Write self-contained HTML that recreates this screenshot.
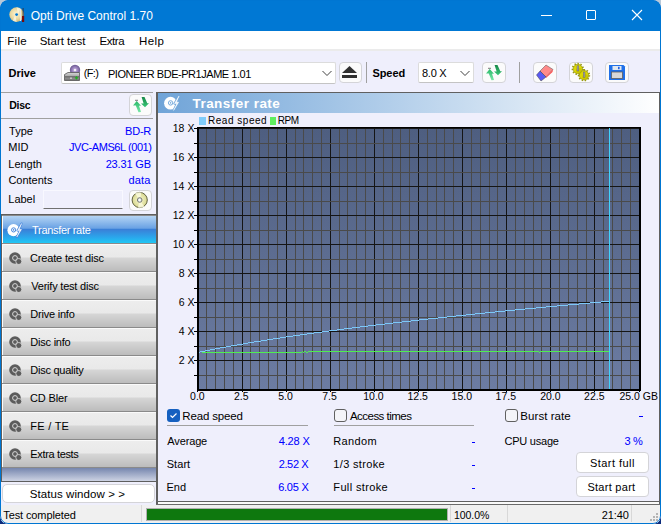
<!DOCTYPE html>
<html><head><meta charset="utf-8"><style>
*{margin:0;padding:0;box-sizing:border-box}
html,body{width:661px;height:524px;overflow:hidden;background:linear-gradient(#b8c8d8 50%,#0c2c7c 50%)}
body{font-family:"Liberation Sans", sans-serif;position:relative}
.a{position:absolute}
.t{position:absolute;white-space:pre;line-height:1}
.btn{position:absolute;background:#fbfbfb;border:1px solid #d4d4d8;border-radius:4px}
.combo{position:absolute;background:#fff;border:1px solid #dcdcdc;border-bottom-color:#c4c4c4;border-radius:2px}
.nav{position:absolute;left:2px;width:154px;height:27px;box-shadow:inset 1px 0 #fdfdfd;background:linear-gradient(#fafafa 0,#fafafa 1px,#ededed 1px,#e9e9e9 13px,#d6d6d6 14px,#bcbcbc 27px)}
.vsep{position:absolute;width:1px;background:#a0a0a0}
</style></head><body>
<div class="a" style="left:0;top:0;width:661px;height:524px;border-radius:8px 8px 8px 8px;overflow:hidden">
<!-- window bg -->
<div class="a" style="left:0;top:0;width:661px;height:524px;background:#efeffc;border-radius:8px 8px 7px 7px"></div>
<!-- title bar -->
<div class="a" style="left:0;top:0;width:661px;height:31px;background:#0078d4;border-radius:8px 8px 0 0"></div>
<div class="a" style="left:541px;top:15px;width:11px;height:1px;background:#fff"></div>
<div class="a" style="left:586px;top:10px;width:10px;height:10px;border:1px solid #fff;border-radius:1px"></div>
<svg class="a" style="left:631px;top:9px" width="12" height="12"><path d="M1 1L11 11M11 1L1 11" stroke="#fff" stroke-width="1.1"/></svg>
<!-- menu -->
<div class="a" style="left:1px;top:31px;width:659px;height:18px;background:#fff"></div>
<div class="a" style="left:1px;top:49px;width:659px;height:2px;background:#ebebeb"></div>
<!-- toolbar -->
<div class="combo" style="left:61px;top:62px;width:275px;height:22px"></div>
<svg class="a" style="left:322px;top:70px" width="10" height="7"><path d="M0.5 1L5 5.5L9.5 1" fill="none" stroke="#404040" stroke-width="1"/></svg>
<div class="btn" style="left:339px;top:62px;width:23px;height:21px"></div>
<svg class="a" style="left:341px;top:66px" width="17" height="13"><path d="M8.5 0L16 7H1z" fill="#303030"/><rect x="1" y="9" width="15" height="3" fill="#303030"/></svg>
<div class="vsep" style="left:366px;top:62px;height:21px"></div>
<div class="combo" style="left:418px;top:62px;width:56px;height:21px"></div>
<svg class="a" style="left:460px;top:70px" width="10" height="7"><path d="M0.5 1L5 5.5L9.5 1" fill="none" stroke="#404040" stroke-width="1"/></svg>
<div class="btn" style="left:482px;top:62px;width:24px;height:21px"></div>
<div class="vsep" style="left:519px;top:62px;height:21px"></div>
<div class="btn" style="left:533px;top:62px;width:24px;height:21px"></div>
<div class="btn" style="left:569px;top:62px;width:24px;height:21px"></div>
<div class="btn" style="left:605px;top:62px;width:24px;height:21px"></div>
<!-- disc panel -->
<div class="a" style="left:1px;top:92px;width:152px;height:1px;background:#a0a0a0"></div>
<div class="a" style="left:1px;top:118px;width:152px;height:1px;background:#a0a0a0"></div>
<div class="btn" style="left:129px;top:94px;width:23px;height:22px"></div>
<div class="a" style="left:43px;top:190px;width:80px;height:19px;border:1px solid #f8f8ff;border-bottom-color:#707070;background:#efeffc;border-radius:1px"></div>
<div class="btn" style="left:129px;top:190px;width:23px;height:21px"></div>
<!-- nav -->
<div class="a" style="left:1px;top:214px;width:157px;height:268px;border:1px solid #5e5e5e;border-right-width:2px;background:#8a8a8a"></div>
<div class="nav" style="top:216px;background:linear-gradient(#b4d4f4,#6aa2e4 45%,#3a80d8 50%,#2aa8ec 80%,#20c8f4)"></div>
<div class="nav" style="top:244px"></div>
<div class="nav" style="top:272px"></div>
<div class="nav" style="top:300px"></div>
<div class="nav" style="top:328px"></div>
<div class="nav" style="top:356px"></div>
<div class="nav" style="top:384px"></div>
<div class="nav" style="top:412px"></div>
<div class="nav" style="top:440px"></div>
<div class="a" style="left:2px;top:468px;width:154px;height:13px;background:linear-gradient(#7686ae,#cdd3e3)"></div>
<div class="btn" style="left:2px;top:484px;width:153px;height:19px;background:#fff;border-radius:5px"></div>
<!-- graph panel -->
<div class="a" style="left:156px;top:92px;width:504px;height:410px;border:1px solid #606060;border-left-width:2px;background:#efeffc"></div>
<div class="a" style="left:158px;top:502px;width:501px;height:2px;background:#fafafa"></div>
<div class="a" style="left:156px;top:501px;width:2px;height:4px;background:#606060"></div>
<div class="a" style="left:659px;top:501px;width:1px;height:4px;background:#606060"></div>
<div class="a" style="left:156px;top:504px;width:504px;height:1px;background:#6a6a6a"></div>
<div class="a" style="left:158px;top:93px;width:501px;height:20px;background:linear-gradient(90deg,#70a4d8,#fff)"></div>
<div class="a" style="left:199px;top:117px;width:7px;height:8px;background:#80ccfa"></div>
<div class="a" style="left:270px;top:117px;width:6px;height:8px;background:#60ee60"></div>
<!-- checkboxes -->
<div class="a" style="left:167px;top:409px;width:13px;height:13px;background:#1560c0;border-radius:3px"></div>
<svg class="a" style="left:167px;top:409px" width="13" height="13"><path d="M3.5 6.5L5.5 8.5L9.5 4.5" fill="none" stroke="#fff" stroke-width="1.2"/></svg>
<div class="a" style="left:167px;top:425px;width:141px;height:1px;background:#a0a0a0"></div>
<div class="a" style="left:334px;top:409px;width:13px;height:13px;border:1px solid #606060;background:#f4f4f8;border-radius:3px"></div>
<div class="a" style="left:334px;top:425px;width:140px;height:1px;background:#a0a0a0"></div>
<div class="a" style="left:505px;top:409px;width:13px;height:13px;border:1px solid #606060;background:#f4f4f8;border-radius:3px"></div>
<div class="a" style="left:639px;top:416px;width:4px;height:1px;background:#0000ff"></div>
<div class="a" style="left:472px;top:442px;width:3px;height:1px;background:#0000ff"></div>
<div class="a" style="left:472px;top:465px;width:3px;height:1px;background:#0000ff"></div>
<div class="a" style="left:472px;top:488px;width:3px;height:1px;background:#0000ff"></div>
<div class="btn" style="left:576px;top:452px;width:73px;height:21px;background:#fff"></div>
<div class="btn" style="left:576px;top:476px;width:73px;height:21px;background:#fff"></div>
<!-- status bar -->
<div class="a" style="left:1px;top:505px;width:659px;height:18px;background:#f0f0f0"></div>
<div class="a" style="left:1px;top:503px;width:155px;height:2px;background:#efeffc"></div>
<div class="vsep" style="left:141px;top:505px;height:17px;background:#d8d8d8"></div>
<div class="a" style="left:146px;top:508px;width:302px;height:13px;border:1px solid #b0b0b0;background:#0e780e"></div>
<div class="vsep" style="left:450px;top:505px;height:17px;background:#d8d8d8"></div>
<div class="vsep" style="left:507px;top:505px;height:17px;background:#d8d8d8"></div>
<div class="vsep" style="left:631px;top:505px;height:17px;background:#d8d8d8"></div>
<svg class="a" style="left:650px;top:513px" width="10" height="10"><g fill="#b4b4b4"><rect x="6" y="0" width="2" height="2"/><rect x="3" y="3" width="2" height="2"/><rect x="6" y="3" width="2" height="2"/><rect x="0" y="6" width="2" height="2"/><rect x="3" y="6" width="2" height="2"/><rect x="6" y="6" width="2" height="2"/></g></svg>
<!-- window border -->


<svg class="a" width="661" height="524" style="left:0;top:0" shape-rendering="crispEdges">
<defs><linearGradient id="pbg" x1="0" y1="0" x2="0" y2="1"><stop offset="0" stop-color="#4e5e80"/><stop offset="1" stop-color="#6c7ca2"/></linearGradient></defs>
<rect x="197" y="127" width="444" height="264" fill="#000"/>
<rect x="199" y="128" width="440" height="261" fill="url(#pbg)"/>
<rect x="206" y="128" width="1" height="261" fill="#4a4a4a"/>
<rect x="215" y="128" width="1" height="261" fill="#4a4a4a"/>
<rect x="224" y="128" width="1" height="261" fill="#4a4a4a"/>
<rect x="233" y="128" width="1" height="261" fill="#4a4a4a"/>
<rect x="242" y="128" width="1" height="261" fill="#151515"/>
<rect x="250" y="128" width="1" height="261" fill="#4a4a4a"/>
<rect x="259" y="128" width="1" height="261" fill="#4a4a4a"/>
<rect x="268" y="128" width="1" height="261" fill="#4a4a4a"/>
<rect x="277" y="128" width="1" height="261" fill="#4a4a4a"/>
<rect x="286" y="128" width="1" height="261" fill="#151515"/>
<rect x="295" y="128" width="1" height="261" fill="#4a4a4a"/>
<rect x="303" y="128" width="1" height="261" fill="#4a4a4a"/>
<rect x="312" y="128" width="1" height="261" fill="#4a4a4a"/>
<rect x="321" y="128" width="1" height="261" fill="#4a4a4a"/>
<rect x="330" y="128" width="1" height="261" fill="#151515"/>
<rect x="339" y="128" width="1" height="261" fill="#4a4a4a"/>
<rect x="347" y="128" width="1" height="261" fill="#4a4a4a"/>
<rect x="356" y="128" width="1" height="261" fill="#4a4a4a"/>
<rect x="365" y="128" width="1" height="261" fill="#4a4a4a"/>
<rect x="374" y="128" width="1" height="261" fill="#151515"/>
<rect x="383" y="128" width="1" height="261" fill="#4a4a4a"/>
<rect x="392" y="128" width="1" height="261" fill="#4a4a4a"/>
<rect x="400" y="128" width="1" height="261" fill="#4a4a4a"/>
<rect x="409" y="128" width="1" height="261" fill="#4a4a4a"/>
<rect x="418" y="128" width="1" height="261" fill="#151515"/>
<rect x="427" y="128" width="1" height="261" fill="#4a4a4a"/>
<rect x="436" y="128" width="1" height="261" fill="#4a4a4a"/>
<rect x="444" y="128" width="1" height="261" fill="#4a4a4a"/>
<rect x="453" y="128" width="1" height="261" fill="#4a4a4a"/>
<rect x="462" y="128" width="1" height="261" fill="#151515"/>
<rect x="471" y="128" width="1" height="261" fill="#4a4a4a"/>
<rect x="480" y="128" width="1" height="261" fill="#4a4a4a"/>
<rect x="489" y="128" width="1" height="261" fill="#4a4a4a"/>
<rect x="497" y="128" width="1" height="261" fill="#4a4a4a"/>
<rect x="506" y="128" width="1" height="261" fill="#151515"/>
<rect x="515" y="128" width="1" height="261" fill="#4a4a4a"/>
<rect x="524" y="128" width="1" height="261" fill="#4a4a4a"/>
<rect x="533" y="128" width="1" height="261" fill="#4a4a4a"/>
<rect x="541" y="128" width="1" height="261" fill="#4a4a4a"/>
<rect x="550" y="128" width="1" height="261" fill="#151515"/>
<rect x="559" y="128" width="1" height="261" fill="#4a4a4a"/>
<rect x="568" y="128" width="1" height="261" fill="#4a4a4a"/>
<rect x="577" y="128" width="1" height="261" fill="#4a4a4a"/>
<rect x="586" y="128" width="1" height="261" fill="#4a4a4a"/>
<rect x="594" y="128" width="1" height="261" fill="#151515"/>
<rect x="603" y="128" width="1" height="261" fill="#4a4a4a"/>
<rect x="612" y="128" width="1" height="261" fill="#4a4a4a"/>
<rect x="621" y="128" width="1" height="261" fill="#4a4a4a"/>
<rect x="630" y="128" width="1" height="261" fill="#4a4a4a"/>
<rect x="199" y="375" width="440" height="1" fill="#4a4a4a"/>
<rect x="199" y="360" width="440" height="1" fill="#151515"/>
<rect x="199" y="346" width="440" height="1" fill="#4a4a4a"/>
<rect x="199" y="331" width="440" height="1" fill="#151515"/>
<rect x="199" y="317" width="440" height="1" fill="#4a4a4a"/>
<rect x="199" y="302" width="440" height="1" fill="#151515"/>
<rect x="199" y="288" width="440" height="1" fill="#4a4a4a"/>
<rect x="199" y="273" width="440" height="1" fill="#151515"/>
<rect x="199" y="259" width="440" height="1" fill="#4a4a4a"/>
<rect x="199" y="244" width="440" height="1" fill="#151515"/>
<rect x="199" y="230" width="440" height="1" fill="#4a4a4a"/>
<rect x="199" y="215" width="440" height="1" fill="#151515"/>
<rect x="199" y="201" width="440" height="1" fill="#4a4a4a"/>
<rect x="199" y="186" width="440" height="1" fill="#151515"/>
<rect x="199" y="172" width="440" height="1" fill="#4a4a4a"/>
<rect x="199" y="157" width="440" height="1" fill="#151515"/>
<rect x="199" y="143" width="440" height="1" fill="#4a4a4a"/>
<rect x="199" y="128" width="440" height="1" fill="#151515"/>
<rect x="194" y="375" width="3" height="1" fill="#000"/>
<rect x="194" y="360" width="3" height="1" fill="#000"/>
<rect x="194" y="346" width="3" height="1" fill="#000"/>
<rect x="194" y="331" width="3" height="1" fill="#000"/>
<rect x="194" y="317" width="3" height="1" fill="#000"/>
<rect x="194" y="302" width="3" height="1" fill="#000"/>
<rect x="194" y="288" width="3" height="1" fill="#000"/>
<rect x="194" y="273" width="3" height="1" fill="#000"/>
<rect x="194" y="259" width="3" height="1" fill="#000"/>
<rect x="194" y="244" width="3" height="1" fill="#000"/>
<rect x="194" y="230" width="3" height="1" fill="#000"/>
<rect x="194" y="215" width="3" height="1" fill="#000"/>
<rect x="194" y="201" width="3" height="1" fill="#000"/>
<rect x="194" y="186" width="3" height="1" fill="#000"/>
<rect x="194" y="172" width="3" height="1" fill="#000"/>
<rect x="194" y="157" width="3" height="1" fill="#000"/>
<rect x="194" y="143" width="3" height="1" fill="#000"/>
<rect x="194" y="128" width="3" height="1" fill="#000"/>
<rect x="197" y="391" width="1" height="1" fill="#000"/>
<rect x="242" y="391" width="1" height="1" fill="#000"/>
<rect x="286" y="391" width="1" height="1" fill="#000"/>
<rect x="330" y="391" width="1" height="1" fill="#000"/>
<rect x="374" y="391" width="1" height="1" fill="#000"/>
<rect x="418" y="391" width="1" height="1" fill="#000"/>
<rect x="462" y="391" width="1" height="1" fill="#000"/>
<rect x="506" y="391" width="1" height="1" fill="#000"/>
<rect x="550" y="391" width="1" height="1" fill="#000"/>
<rect x="594" y="391" width="1" height="1" fill="#000"/>
<rect x="639" y="391" width="1" height="1" fill="#000"/>
</svg>
<svg class="a" width="661" height="524" style="left:0;top:0" shape-rendering="crispEdges">
<rect x="202" y="352" width="100" height="1" fill="#50ee50"/>
<rect x="302" y="351" width="1" height="1" fill="#50ee50"/>
<rect x="303" y="352" width="1" height="1" fill="#50ee50"/>
<rect x="304" y="351" width="2" height="1" fill="#50ee50"/>
<rect x="306" y="352" width="2" height="1" fill="#50ee50"/>
<rect x="308" y="351" width="231" height="1" fill="#50ee50"/>
<rect x="539" y="352" width="1" height="1" fill="#50ee50"/>
<rect x="540" y="351" width="69" height="1" fill="#50ee50"/>
<rect x="199" y="352" width="1" height="1" fill="#7cc8f8"/>
<rect x="200" y="351" width="5" height="1" fill="#7cc8f8"/>
<rect x="205" y="350" width="5" height="1" fill="#7cc8f8"/>
<rect x="210" y="349" width="5" height="1" fill="#7cc8f8"/>
<rect x="215" y="348" width="5" height="1" fill="#7cc8f8"/>
<rect x="220" y="347" width="6" height="1" fill="#7cc8f8"/>
<rect x="226" y="346" width="5" height="1" fill="#7cc8f8"/>
<rect x="231" y="345" width="6" height="1" fill="#7cc8f8"/>
<rect x="237" y="344" width="6" height="1" fill="#7cc8f8"/>
<rect x="243" y="343" width="5" height="1" fill="#7cc8f8"/>
<rect x="248" y="342" width="6" height="1" fill="#7cc8f8"/>
<rect x="254" y="341" width="7" height="1" fill="#7cc8f8"/>
<rect x="261" y="340" width="6" height="1" fill="#7cc8f8"/>
<rect x="267" y="339" width="6" height="1" fill="#7cc8f8"/>
<rect x="273" y="338" width="7" height="1" fill="#7cc8f8"/>
<rect x="280" y="337" width="6" height="1" fill="#7cc8f8"/>
<rect x="286" y="336" width="7" height="1" fill="#7cc8f8"/>
<rect x="293" y="335" width="7" height="1" fill="#7cc8f8"/>
<rect x="300" y="334" width="7" height="1" fill="#7cc8f8"/>
<rect x="307" y="333" width="7" height="1" fill="#7cc8f8"/>
<rect x="314" y="332" width="8" height="1" fill="#7cc8f8"/>
<rect x="322" y="331" width="7" height="1" fill="#7cc8f8"/>
<rect x="329" y="330" width="8" height="1" fill="#7cc8f8"/>
<rect x="337" y="329" width="7" height="1" fill="#7cc8f8"/>
<rect x="344" y="328" width="8" height="1" fill="#7cc8f8"/>
<rect x="352" y="327" width="8" height="1" fill="#7cc8f8"/>
<rect x="360" y="326" width="8" height="1" fill="#7cc8f8"/>
<rect x="368" y="325" width="8" height="1" fill="#7cc8f8"/>
<rect x="376" y="324" width="9" height="1" fill="#7cc8f8"/>
<rect x="385" y="323" width="8" height="1" fill="#7cc8f8"/>
<rect x="393" y="322" width="9" height="1" fill="#7cc8f8"/>
<rect x="402" y="321" width="9" height="1" fill="#7cc8f8"/>
<rect x="411" y="320" width="8" height="1" fill="#7cc8f8"/>
<rect x="419" y="319" width="9" height="1" fill="#7cc8f8"/>
<rect x="428" y="318" width="10" height="1" fill="#7cc8f8"/>
<rect x="438" y="317" width="9" height="1" fill="#7cc8f8"/>
<rect x="447" y="316" width="9" height="1" fill="#7cc8f8"/>
<rect x="456" y="315" width="10" height="1" fill="#7cc8f8"/>
<rect x="466" y="314" width="9" height="1" fill="#7cc8f8"/>
<rect x="475" y="313" width="10" height="1" fill="#7cc8f8"/>
<rect x="485" y="312" width="10" height="1" fill="#7cc8f8"/>
<rect x="495" y="311" width="10" height="1" fill="#7cc8f8"/>
<rect x="505" y="310" width="10" height="1" fill="#7cc8f8"/>
<rect x="515" y="309" width="10" height="1" fill="#7cc8f8"/>
<rect x="525" y="308" width="11" height="1" fill="#7cc8f8"/>
<rect x="536" y="307" width="10" height="1" fill="#7cc8f8"/>
<rect x="546" y="306" width="11" height="1" fill="#7cc8f8"/>
<rect x="557" y="305" width="11" height="1" fill="#7cc8f8"/>
<rect x="568" y="304" width="11" height="1" fill="#7cc8f8"/>
<rect x="579" y="303" width="11" height="1" fill="#7cc8f8"/>
<rect x="590" y="302" width="11" height="1" fill="#7cc8f8"/>
<rect x="601" y="301" width="8" height="1" fill="#7cc8f8"/>
<rect x="609" y="128" width="1" height="261" fill="#40d4fc"/>
</svg>
<!-- app icon -->
<svg class="a" style="left:8px;top:6px" width="18" height="18" viewBox="0 0 18 18">
<defs><radialGradient id="gold" cx="0.45" cy="0.45" r="0.6"><stop offset="0" stop-color="#fff4d0"/><stop offset="0.6" stop-color="#e8d8a0"/><stop offset="1" stop-color="#c8b070"/></radialGradient></defs>
<circle cx="8.6" cy="8.6" r="7.3" fill="url(#gold)"/>
<path d="M8.6 1.3L10 8.6L12.5 2.5z M8.6 16L7.3 8.6L4.8 14.8z" fill="#fffbe8" opacity="0.7"/>
<circle cx="8.6" cy="8.6" r="1.4" fill="#0078d4"/>
<path d="M11.6 3 L13 3 L13.2 15 L12 15z" fill="#e8e8e8"/>
<rect x="14" y="10" width="2.2" height="6" fill="#7a0a0a"/>
<rect x="14.6" y="2" width="1" height="8" fill="#303848"/>
</svg>
<!-- drive icon -->
<svg class="a" style="left:63px;top:64px" width="18" height="18" viewBox="0 0 18 18">
<defs><linearGradient id="drv" x1="0" y1="0" x2="0" y2="1"><stop offset="0" stop-color="#d8d8d8"/><stop offset="1" stop-color="#707070"/></linearGradient>
<radialGradient id="pdisc" cx="0.5" cy="0.5" r="0.5"><stop offset="0" stop-color="#e8e0f0"/><stop offset="0.4" stop-color="#a890c8"/><stop offset="1" stop-color="#6a5890"/></radialGradient></defs>
<circle cx="12" cy="6" r="5.2" fill="url(#pdisc)"/>
<circle cx="12" cy="6" r="1" fill="#fff"/>
<path d="M1.5 10.5 L5 8.5 L16.5 8.5 L16.5 16.5 L1.5 16.5z" fill="url(#drv)" stroke="#555" stroke-width="0.8"/>
<rect x="2" y="12.5" width="14" height="0.8" fill="#404040"/>
<rect x="7" y="13.7" width="2" height="0.8" fill="#fff"/>
<path d="M13.5 12.2v3.2M11.9 13.8h3.2" stroke="#20b020" stroke-width="1.2"/>
</svg>
<!-- refresh icons -->
<svg class="a" style="left:482px;top:62px" width="24" height="21" viewBox="0 0 24 21">
<defs><linearGradient id="gup" x1="0" y1="0" x2="0" y2="1"><stop offset="0" stop-color="#28b868"/><stop offset="1" stop-color="#78e8a8"/></linearGradient>
<linearGradient id="gdn" x1="0" y1="0" x2="0" y2="1"><stop offset="0" stop-color="#188848"/><stop offset="1" stop-color="#38c878"/></linearGradient></defs>
<path d="M4 11.5 L7.7 7 L12 11.7 L10 11.7 L12 18 L9.5 18.2 L6.8 11.6 z" fill="url(#gup)"/>
<path d="M12.6 3 L15.5 3 L18.3 9.3 L20 9.2 L16 13.3 L12 9.4 L14.6 9.4 z" fill="url(#gdn)"/>
<path d="M6 6.3h3" stroke="#404040" stroke-width="0.7"/>
</svg>
<svg class="a" style="left:129px;top:94px" width="24" height="21" viewBox="0 0 24 21">
<path d="M4 11.5 L7.7 7 L12 11.7 L10 11.7 L12 18 L9.5 18.2 L6.8 11.6 z" fill="url(#gup)"/>
<path d="M12.6 3 L15.5 3 L18.3 9.3 L20 9.2 L16 13.3 L12 9.4 L14.6 9.4 z" fill="url(#gdn)"/>
<path d="M6 6.3h3" stroke="#404040" stroke-width="0.7"/>
</svg>
<!-- eraser -->
<svg class="a" style="left:533px;top:62px" width="24" height="21" viewBox="0 0 24 21">
<path d="M13 3 L20 7.5 L13 15 L7 9z" fill="#ff8a8a" stroke="#505050" stroke-width="0.5"/>
<path d="M20 7.5 L19.5 10 L13 16 L13 15z" fill="#ff5050"/>
<path d="M7 9 L13 15 L8 19 L3.5 13z" fill="#5a5af4" stroke="#404040" stroke-width="0.5"/>
</svg>
<!-- gears -->
<svg class="a" style="left:569px;top:62px" width="24" height="21" viewBox="0 0 24 21">
<g stroke="#9a9a10" stroke-width="1.8" stroke-dasharray="1.4 1.6" fill="none">
<circle cx="8.8" cy="7" r="5.3"/><circle cx="15" cy="13.2" r="5.3"/>
</g>
<g fill="#dcd800" stroke="#8a8a18" stroke-width="0.6">
<circle cx="8.8" cy="7" r="4.7"/><circle cx="15" cy="13.2" r="4.7"/>
</g>
<circle cx="10" cy="9" r="3" fill="#b8b400" opacity="0.5"/>
<circle cx="16.2" cy="15.2" r="3" fill="#b8b400" opacity="0.5"/>
<rect x="8" y="3.8" width="1.8" height="5.2" fill="#a0a0a0" stroke="#606060" stroke-width="0.4"/>
<rect x="14.2" y="10" width="1.8" height="5.2" fill="#a0a0a0" stroke="#606060" stroke-width="0.4"/>
</svg>
<!-- save -->
<svg class="a" style="left:605px;top:62px" width="24" height="21" viewBox="0 0 24 21">
<path d="M4 3 L18.5 3 L20 4.5 L20 18 L4 18z" fill="#2070e8"/>
<rect x="7.5" y="4" width="9" height="4" fill="#e0e8f0"/>
<rect x="13" y="4.8" width="1.6" height="2.4" fill="#2060e0"/>
<rect x="6.5" y="10" width="11" height="6.5" fill="#d8d8d8" stroke="#606060" stroke-width="0.8"/>
</svg>
<!-- disc label button icon -->
<svg class="a" style="left:129px;top:190px" width="23" height="21" viewBox="0 0 23 21">
<defs><radialGradient id="ydisc" cx="0.5" cy="0.5" r="0.5"><stop offset="0" stop-color="#f8f8d0"/><stop offset="1" stop-color="#d8d890"/></radialGradient></defs>
<circle cx="10.7" cy="10" r="7.6" fill="url(#ydisc)" stroke="#505030" stroke-width="0.9"/>
<path d="M10.7 10 L6 3.5 A7.6 7.6 0 0 1 12.5 2.6z M10.7 10 L15.4 16.5 A7.6 7.6 0 0 1 8.9 17.4z" fill="#fbfbe0" opacity="0.8"/>
<circle cx="10.7" cy="10" r="2.3" fill="#e0e8e0" stroke="#787878" stroke-width="1"/>
<circle cx="10.7" cy="10" r="1.1" fill="#fff"/>
</svg>
<!-- header icon -->
<svg class="a" style="left:163px;top:95px" width="18" height="17" viewBox="0 0 18 17">
<circle cx="7.5" cy="8.2" r="6.4" fill="#fff"/>
<path d="M16 1 L11.5 8.6 L14 8.6 L10.6 15.4 L15.6 7.2 L13.4 7.2z" fill="#76aadc" stroke="#76aadc" stroke-width="2.2" stroke-linejoin="round"/>
<path d="M16 1 L11.5 8.6 L14 8.6 L10.6 15.4 L15.6 7.2 L13.4 7.2z" fill="#fff" stroke="#fff" stroke-width="0.5"/>
<circle cx="7.6" cy="7.9" r="2.2" fill="#fff" stroke="#76aadc" stroke-width="1"/>
<circle cx="7.6" cy="7.9" r="0.8" fill="#76aadc"/>
</svg>
<!-- nav icons -->
<svg class="a" style="left:6px;top:222px" width="18" height="17" viewBox="0 0 18 17">
<circle cx="7.5" cy="8.2" r="6.1" fill="#fff"/>
<path d="M15.6 1.5 L11.5 8.6 L14 8.6 L10.8 15 L15.4 7.4 L13.2 7.4z" fill="#4a88dc" stroke="#4a88dc" stroke-width="2" stroke-linejoin="round"/>
<path d="M15.6 1.5 L11.5 8.6 L14 8.6 L10.8 15 L15.4 7.4 L13.2 7.4z" fill="#fff" stroke="#fff" stroke-width="0.5"/>
<circle cx="7.6" cy="7.9" r="2.1" fill="#fff" stroke="#4a88dc" stroke-width="1"/>
<circle cx="7.6" cy="7.9" r="0.8" fill="#4a88dc"/>
</svg>
<svg class="a" style="left:8px;top:251px" width="16" height="15" viewBox="0 0 16 15">
<circle cx="7" cy="7" r="5.8" fill="#5c5c5c"/>
<circle cx="7" cy="7" r="2.4" fill="none" stroke="#d8d8d8" stroke-width="1"/>
<circle cx="10.8" cy="10.5" r="3" fill="#5c5c5c" stroke="#e0e0e0" stroke-width="0.8"/>
</svg>
<svg class="a" style="left:8px;top:279px" width="16" height="15" viewBox="0 0 16 15">
<circle cx="7" cy="7" r="5.8" fill="#5c5c5c"/>
<circle cx="7" cy="7" r="2.4" fill="none" stroke="#d8d8d8" stroke-width="1"/>
<circle cx="10.8" cy="10.5" r="3" fill="#5c5c5c" stroke="#e0e0e0" stroke-width="0.8"/>
</svg>
<svg class="a" style="left:8px;top:307px" width="16" height="15" viewBox="0 0 16 15">
<circle cx="7" cy="7" r="5.8" fill="#5c5c5c"/>
<circle cx="7" cy="7" r="2.4" fill="none" stroke="#d8d8d8" stroke-width="1"/>
<circle cx="10.8" cy="10.5" r="3" fill="#5c5c5c" stroke="#e0e0e0" stroke-width="0.8"/>
</svg>
<svg class="a" style="left:8px;top:335px" width="16" height="15" viewBox="0 0 16 15">
<circle cx="7" cy="7" r="5.8" fill="#5c5c5c"/>
<circle cx="7" cy="7" r="2.4" fill="none" stroke="#d8d8d8" stroke-width="1"/>
<circle cx="10.8" cy="10.5" r="3" fill="#5c5c5c" stroke="#e0e0e0" stroke-width="0.8"/>
</svg>
<svg class="a" style="left:8px;top:363px" width="16" height="15" viewBox="0 0 16 15">
<circle cx="7" cy="7" r="5.8" fill="#5c5c5c"/>
<circle cx="7" cy="7" r="2.4" fill="none" stroke="#d8d8d8" stroke-width="1"/>
<circle cx="10.8" cy="10.5" r="3" fill="#5c5c5c" stroke="#e0e0e0" stroke-width="0.8"/>
</svg>
<svg class="a" style="left:8px;top:391px" width="16" height="15" viewBox="0 0 16 15">
<circle cx="7" cy="7" r="5.8" fill="#5c5c5c"/>
<circle cx="7" cy="7" r="2.4" fill="none" stroke="#d8d8d8" stroke-width="1"/>
<circle cx="10.8" cy="10.5" r="3" fill="#5c5c5c" stroke="#e0e0e0" stroke-width="0.8"/>
</svg>
<svg class="a" style="left:8px;top:419px" width="16" height="15" viewBox="0 0 16 15">
<circle cx="7" cy="7" r="5.8" fill="#5c5c5c"/>
<circle cx="7" cy="7" r="2.4" fill="none" stroke="#d8d8d8" stroke-width="1"/>
<circle cx="10.8" cy="10.5" r="3" fill="#5c5c5c" stroke="#e0e0e0" stroke-width="0.8"/>
</svg>
<svg class="a" style="left:8px;top:447px" width="16" height="15" viewBox="0 0 16 15">
<circle cx="7" cy="7" r="5.8" fill="#5c5c5c"/>
<circle cx="7" cy="7" r="2.4" fill="none" stroke="#d8d8d8" stroke-width="1"/>
<circle cx="10.8" cy="10.5" r="3" fill="#5c5c5c" stroke="#e0e0e0" stroke-width="0.8"/>
</svg>

<div class="t" style="top:9.84px;font-size:12px;color:#fff;letter-spacing:0.007px;left:30.66px;">Opti Drive Control 1.70</div>
<div class="t" style="top:36.07px;font-size:11.5px;color:#000;letter-spacing:0.307px;left:7.28px;">File</div>
<div class="t" style="top:36.07px;font-size:11.5px;color:#000;letter-spacing:-0.033px;left:39.72px;">Start test</div>
<div class="t" style="top:36.07px;font-size:11.5px;color:#000;letter-spacing:-0.425px;left:99.52px;">Extra</div>
<div class="t" style="top:36.07px;font-size:11.5px;color:#000;letter-spacing:0.400px;left:139.10px;">Help</div>
<div class="t" style="top:67.69px;font-size:11px;color:#000;font-weight:bold;letter-spacing:-0.010px;left:8.46px;">Drive</div>
<div class="t" style="top:67.59px;font-size:11px;color:#000;letter-spacing:-0.693px;left:83.80px;">(F:)</div>
<div class="t" style="top:69.49px;font-size:11px;color:#000;letter-spacing:-0.462px;left:107.94px;">PIONEER BDE-PR1JAME 1.01</div>
<div class="t" style="top:67.69px;font-size:11px;color:#000;font-weight:bold;letter-spacing:-0.080px;left:372.48px;">Speed</div>
<div class="t" style="top:67.87px;font-size:11px;color:#000;letter-spacing:-0.255px;left:422.00px;">8.0 X</div>
<div class="t" style="top:99.93px;font-size:10.5px;color:#000;font-weight:bold;letter-spacing:-0.300px;left:9.30px;">Disc</div>
<div class="t" style="top:126.49px;font-size:11px;color:#000;left:9.08px;">Type</div>
<div class="t" style="top:141.69px;font-size:11px;color:#000;left:8.28px;">MID</div>
<div class="t" style="top:158.87px;font-size:11px;color:#000;left:8.28px;">Length</div>
<div class="t" style="top:174.79px;font-size:11px;color:#000;left:8.38px;">Contents</div>
<div class="t" style="top:193.53px;font-size:11px;color:#000;left:8.28px;">Label</div>
<div class="t" style="top:125.61px;font-size:11px;color:#0000ff;-webkit-text-stroke:0.05px #0000ff;letter-spacing:-0.200px;left:125.02px;">BD-R</div>
<div class="t" style="top:141.69px;font-size:11px;color:#0000ff;-webkit-text-stroke:0.05px #0000ff;letter-spacing:-0.421px;left:69.00px;">JVC-AMS6L (001)</div>
<div class="t" style="top:158.87px;font-size:11px;color:#0000ff;-webkit-text-stroke:0.05px #0000ff;letter-spacing:-0.140px;left:105.64px;">23.31 GB</div>
<div class="t" style="top:174.79px;font-size:11px;color:#0000ff;-webkit-text-stroke:0.05px #0000ff;letter-spacing:0.140px;left:128.62px;">data</div>
<div class="t" style="top:96.77px;font-size:13.5px;color:#fff;font-weight:bold;letter-spacing:0.463px;left:192.48px;">Transfer rate</div>
<div class="t" style="top:116.15px;font-size:10px;color:#000;letter-spacing:0.524px;left:208.04px;">Read speed</div>
<div class="t" style="top:116.15px;font-size:10px;color:#000;letter-spacing:-0.470px;left:277.80px;">RPM</div>
<div class="t" style="top:224.83px;font-size:11px;color:#fff;letter-spacing:-0.323px;left:32.08px;">Transfer rate</div>
<div class="t" style="top:252.87px;font-size:11px;color:#000;letter-spacing:-0.164px;left:30.04px;">Create test disc</div>
<div class="t" style="top:280.95px;font-size:11px;color:#000;letter-spacing:-0.215px;left:31.24px;">Verify test disc</div>
<div class="t" style="top:411.07px;font-size:11.5px;color:#000;letter-spacing:-0.167px;left:182.36px;">Read speed</div>
<div class="t" style="top:411.07px;font-size:11.5px;color:#000;letter-spacing:-0.518px;left:349.90px;">Access times</div>
<div class="t" style="top:411.07px;font-size:11.5px;color:#000;letter-spacing:0.042px;left:520.36px;">Burst rate</div>
<div class="t" style="top:435.69px;font-size:11px;color:#000;letter-spacing:-0.143px;left:167.32px;">Average</div>
<div class="t" style="top:458.69px;font-size:11px;color:#000;letter-spacing:0.050px;left:166.72px;">Start</div>
<div class="t" style="top:481.69px;font-size:11px;color:#000;letter-spacing:0.010px;left:166.52px;">End</div>
<div class="t" style="top:435.69px;font-size:11px;color:#0000ff;-webkit-text-stroke:0.05px #0000ff;letter-spacing:-0.164px;left:278.74px;">4.28 X</div>
<div class="t" style="top:458.69px;font-size:11px;color:#0000ff;-webkit-text-stroke:0.05px #0000ff;letter-spacing:-0.344px;left:278.64px;">2.52 X</div>
<div class="t" style="top:481.69px;font-size:11px;color:#0000ff;-webkit-text-stroke:0.05px #0000ff;letter-spacing:-0.252px;left:278.20px;">6.05 X</div>
<div class="t" style="top:435.69px;font-size:11px;color:#000;letter-spacing:0.380px;left:333.30px;">Random</div>
<div class="t" style="top:458.69px;font-size:11px;color:#000;letter-spacing:0.344px;left:333.30px;">1/3 stroke</div>
<div class="t" style="top:481.69px;font-size:11px;color:#000;letter-spacing:0.360px;left:333.30px;">Full stroke</div>
<div class="t" style="top:435.69px;font-size:11px;color:#000;letter-spacing:-0.215px;left:504.46px;">CPU usage</div>
<div class="t" style="top:435.69px;font-size:11px;color:#0000ff;-webkit-text-stroke:0.05px #0000ff;letter-spacing:-0.360px;left:624.46px;">3 %</div>
<div class="t" style="top:457.69px;font-size:11px;color:#000;letter-spacing:0.438px;left:590.04px;">Start full</div>
<div class="t" style="top:481.53px;font-size:11px;color:#000;letter-spacing:0.280px;left:587.38px;">Start part</div>
<div class="t" style="top:489.15px;font-size:11.5px;color:#000;letter-spacing:0.078px;left:29.72px;">Status window &gt; &gt;</div>
<div class="t" style="top:510.07px;font-size:11px;color:#000;letter-spacing:-0.105px;left:3.24px;">Test completed</div>
<div class="t" style="top:510.11px;font-size:10.5px;color:#000;letter-spacing:-0.080px;left:454.02px;">100.0%</div>
<div class="t" style="top:509.69px;font-size:11px;color:#000;letter-spacing:-0.060px;left:601.66px;">21:40</div>
<div class="t" style="top:308.83px;font-size:11px;color:#000;letter-spacing:-0.227px;left:30.36px;">Drive info</div>
<div class="t" style="top:336.87px;font-size:11px;color:#000;letter-spacing:-0.230px;left:30.36px;">Disc info</div>
<div class="t" style="top:364.83px;font-size:11px;color:#000;letter-spacing:-0.260px;left:30.36px;">Disc quality</div>
<div class="t" style="top:392.83px;font-size:11px;color:#000;letter-spacing:-0.160px;left:30.04px;">CD Bler</div>
<div class="t" style="top:420.87px;font-size:11px;color:#000;letter-spacing:0.253px;left:30.36px;">FE / TE</div>
<div class="t" style="top:448.95px;font-size:11px;color:#000;letter-spacing:-0.352px;left:30.36px;">Extra tests</div>
<div class="t" style="top:122.93px;font-size:10.5px;color:#000;left:-105.62px;width:300px;text-align:right;">18 X</div>
<div class="t" style="top:151.93px;font-size:10.5px;color:#000;left:-105.62px;width:300px;text-align:right;">16 X</div>
<div class="t" style="top:180.93px;font-size:10.5px;color:#000;left:-105.62px;width:300px;text-align:right;">14 X</div>
<div class="t" style="top:209.93px;font-size:10.5px;color:#000;left:-105.62px;width:300px;text-align:right;">12 X</div>
<div class="t" style="top:238.93px;font-size:10.5px;color:#000;left:-105.62px;width:300px;text-align:right;">10 X</div>
<div class="t" style="top:267.93px;font-size:10.5px;color:#000;left:-105.62px;width:300px;text-align:right;">8 X</div>
<div class="t" style="top:296.93px;font-size:10.5px;color:#000;left:-105.62px;width:300px;text-align:right;">6 X</div>
<div class="t" style="top:325.93px;font-size:10.5px;color:#000;left:-105.62px;width:300px;text-align:right;">4 X</div>
<div class="t" style="top:354.93px;font-size:10.5px;color:#000;left:-105.62px;width:300px;text-align:right;">2 X</div>
<div class="t" style="top:390.51px;font-size:10.5px;color:#000;left:47.37px;width:300px;text-align:center;">0.0</div>
<div class="t" style="top:390.51px;font-size:10.5px;color:#000;left:91.32px;width:300px;text-align:center;">2.5</div>
<div class="t" style="top:390.51px;font-size:10.5px;color:#000;left:135.51px;width:300px;text-align:center;">5.0</div>
<div class="t" style="top:390.51px;font-size:10.5px;color:#000;left:179.50px;width:300px;text-align:center;">7.5</div>
<div class="t" style="top:390.51px;font-size:10.5px;color:#000;left:223.49px;width:300px;text-align:center;">10.0</div>
<div class="t" style="top:390.51px;font-size:10.5px;color:#000;left:267.74px;width:300px;text-align:center;">12.5</div>
<div class="t" style="top:390.51px;font-size:10.5px;color:#000;left:311.78px;width:300px;text-align:center;">15.0</div>
<div class="t" style="top:390.51px;font-size:10.5px;color:#000;left:355.77px;width:300px;text-align:center;">17.5</div>
<div class="t" style="top:390.51px;font-size:10.5px;color:#000;left:400.36px;width:300px;text-align:center;">20.0</div>
<div class="t" style="top:390.51px;font-size:10.5px;color:#000;left:444.31px;width:300px;text-align:center;">22.5</div>
<div class="t" style="top:390.51px;font-size:10.5px;color:#000;left:488.65px;width:300px;text-align:center;">25.0 GB</div>
<div class="a" style="left:0;top:0;width:661px;height:524px;border:1px solid #0076d2;border-radius:8px"></div>
</div>
</body></html>
